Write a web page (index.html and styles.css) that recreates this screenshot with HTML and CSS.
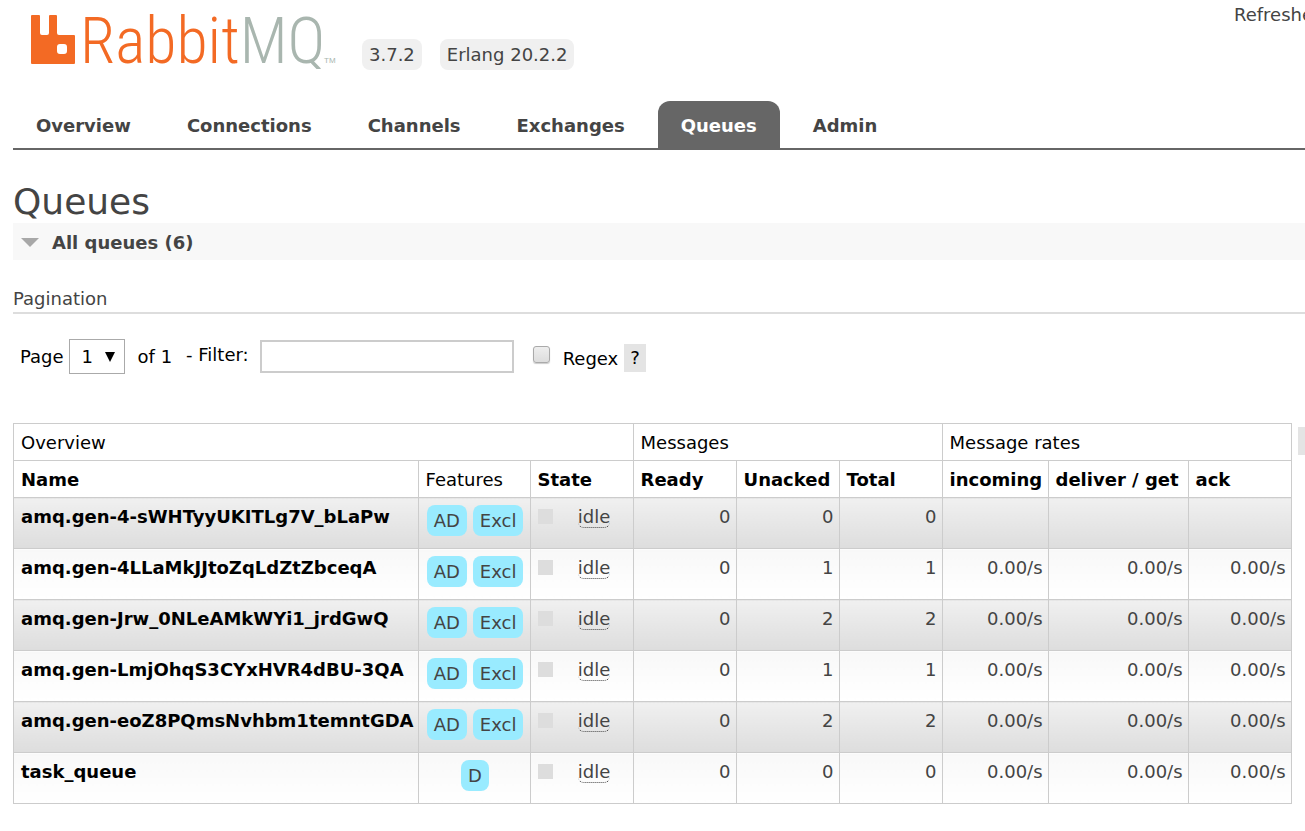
FILE: index.html
```html
<!DOCTYPE html>
<html lang="en">
<head>
    <meta charset="UTF-8">
    <meta name="viewport" content="width=device-width, initial-scale=1.0">
    <title>RabbitMQ Management</title>
    <link rel="stylesheet" href="styles.css">
</head>
<body>
    <header>
        <a class="logo" href="#" aria-label="RabbitMQ">
            <svg width="306" height="64" viewBox="0 -5 306 64">
                <path fill="#f36a24" fill-rule="evenodd" d="M0 6q0-1 1-1h7q1 0 1 1v17q0 2 2 2h5q2 0 2-2V6q0-1 1-1h6q1 0 1 1v17q0 2 2 2h15q1 0 1 1v27q0 1-1 1H1q-1 0-1-1zM29 34q-3 0-3 3v4q0 3 3 3h4q3 0 3-3v-4q0-3-3-3z"/>
                <text class="logo-text" x="49" y="53"><tspan fill="#f36a24">Rabbit</tspan><tspan fill="#a9b6af">MQ</tspan></text>
                <text class="logo-tm" x="293" y="53" fill="#a9b6af">TM</text>
            </svg>
        </a>
        <span class="version">3.7.2</span>
        <span class="version">Erlang 20.2.2</span>
        <span class="refreshed">Refreshed</span>
    </header>
    <nav>
        <a href="#">Overview</a>
        <a href="#">Connections</a>
        <a href="#">Channels</a>
        <a href="#">Exchanges</a>
        <a href="#" class="selected">Queues</a>
        <a href="#">Admin</a>
    </nav>
    <main>
        <h1>Queues</h1>
        <h2><svg width="18" height="10" viewBox="0 0 18 10"><path fill="#a8a8a8" d="M0 0h18L9 9z"/></svg>All queues (6)</h2>
        <h3>Pagination</h3>
        <form class="pagination">
            <label for="page">Page</label>
            <select id="page">
                <option>1</option>
            </select>
            <span class="pages">of 1</span>
            <label class="filter-label" for="filter">- Filter:</label>
            <input type="text" id="filter" class="filter">
            <input type="checkbox" id="regex" class="regex">
            <label class="regex-label" for="regex">Regex</label>
            <button type="button" class="help">?</button>
        </form>
        <div class="queues">
            <table>
                <thead>
                    <tr>
                        <th colspan="3">Overview</th>
                        <th colspan="3">Messages</th>
                        <th colspan="3">Message rates</th>
                    </tr>
                    <tr>
                        <th class="name"><a href="#">Name</a></th>
                        <th class="features">Features</th>
                        <th class="count"><a href="#">State</a></th>
                        <th class="count"><a href="#">Ready</a></th>
                        <th class="count"><a href="#">Unacked</a></th>
                        <th class="count"><a href="#">Total</a></th>
                        <th class="incoming"><a href="#">incoming</a></th>
                        <th class="deliver"><a href="#">deliver / get</a></th>
                        <th class="count"><a href="#">ack</a></th>
                    </tr>
                </thead>
                <tbody>
                    <tr>
                        <td><a href="#">amq.gen-4-sWHTyyUKITLg7V_bLaPw</a></td>
                        <td class="tags"><span>AD</span><span>Excl</span></td>
                        <td class="state"><i></i><abbr>idle</abbr></td>
                        <td class="num">0</td>
                        <td class="num">0</td>
                        <td class="num">0</td>
                        <td class="num"></td>
                        <td class="num"></td>
                        <td class="num"></td>
                    </tr>
                    <tr>
                        <td><a href="#">amq.gen-4LLaMkJJtoZqLdZtZbceqA</a></td>
                        <td class="tags"><span>AD</span><span>Excl</span></td>
                        <td class="state"><i></i><abbr>idle</abbr></td>
                        <td class="num">0</td>
                        <td class="num">1</td>
                        <td class="num">1</td>
                        <td class="num">0.00/s</td>
                        <td class="num">0.00/s</td>
                        <td class="num">0.00/s</td>
                    </tr>
                    <tr>
                        <td><a href="#">amq.gen-Jrw_0NLeAMkWYi1_jrdGwQ</a></td>
                        <td class="tags"><span>AD</span><span>Excl</span></td>
                        <td class="state"><i></i><abbr>idle</abbr></td>
                        <td class="num">0</td>
                        <td class="num">2</td>
                        <td class="num">2</td>
                        <td class="num">0.00/s</td>
                        <td class="num">0.00/s</td>
                        <td class="num">0.00/s</td>
                    </tr>
                    <tr>
                        <td><a href="#">amq.gen-LmjOhqS3CYxHVR4dBU-3QA</a></td>
                        <td class="tags"><span>AD</span><span>Excl</span></td>
                        <td class="state"><i></i><abbr>idle</abbr></td>
                        <td class="num">0</td>
                        <td class="num">1</td>
                        <td class="num">1</td>
                        <td class="num">0.00/s</td>
                        <td class="num">0.00/s</td>
                        <td class="num">0.00/s</td>
                    </tr>
                    <tr>
                        <td><a href="#">amq.gen-eoZ8PQmsNvhbm1temntGDA</a></td>
                        <td class="tags"><span>AD</span><span>Excl</span></td>
                        <td class="state"><i></i><abbr>idle</abbr></td>
                        <td class="num">0</td>
                        <td class="num">2</td>
                        <td class="num">2</td>
                        <td class="num">0.00/s</td>
                        <td class="num">0.00/s</td>
                        <td class="num">0.00/s</td>
                    </tr>
                    <tr>
                        <td><a href="#">task_queue</a></td>
                        <td class="tags"><span>D</span></td>
                        <td class="state"><i></i><abbr>idle</abbr></td>
                        <td class="num">0</td>
                        <td class="num">0</td>
                        <td class="num">0</td>
                        <td class="num">0.00/s</td>
                        <td class="num">0.00/s</td>
                        <td class="num">0.00/s</td>
                    </tr>
                </tbody>
            </table>
            <button type="button" class="columns">+/-</button>
        </div>
    </main>
</body>
</html>
```
FILE: styles.css
```css
body {
    margin: 0;
    padding-left: 13px;
    font: 18px/24px Verdana, "DejaVu Sans", sans-serif;
    color: #444;
    background: white;
    overflow-x: hidden;
}
a {
    color: black;
    font-weight: bold;
    text-decoration: none;
}
header {
    display: flex;
    align-items: flex-start;
    gap: 18px;
    padding-left: 18px;
}
.logo {
    padding-top: 5px;
    margin-right: 7px;
}
.logo svg {
    display: block;
}
.logo-text {
    font-family: "Roboto Condensed", "Liberation Sans Narrow", "Liberation Sans", sans-serif;
    font-size: 64px;
    font-weight: 300;
}
.logo-tm {
    font-family: "Liberation Sans", sans-serif;
    font-size: 8px;
    font-weight: normal;
}
.version {
    margin-top: 39px;
    padding: 4px 7px 3px;
    border-radius: 8px;
    background: #f0f0f0;
    white-space: nowrap;
}
.refreshed {
    flex: none;
    width: 71px;
    margin-left: auto;
    padding-top: 3px;
    white-space: nowrap;
}
nav {
    display: flex;
    gap: 10px;
    margin-top: 31px;
    border-bottom: 2px solid #666;
}
nav a {
    padding: 13px 23px 10px;
    border-radius: 12px 12px 0 0;
    color: #444;
}
nav .selected {
    background: #666;
    color: white;
}
h1 {
    margin: 30px 0 0;
    font-size: 36px;
    line-height: 43px;
    font-weight: normal;
}
h2 {
    display: flex;
    align-items: center;
    gap: 13px;
    margin: 0;
    padding: 8px 8px 5px;
    font-size: 18px;
    background: #f8f8f8;
}
h3 {
    margin: 27px 0 0;
    padding-bottom: 1px;
    border-bottom: 2px solid #ddd;
    font-size: 18px;
    font-weight: normal;
}
.pagination {
    display: flex;
    align-items: center;
    margin: 25px 0 49px;
    padding-left: 7px;
    color: black;
}
.pagination select {
    appearance: none;
    width: 56px;
    height: 35px;
    margin: 0 13px 0 5px;
    padding: 0 12px;
    border: 1px solid #aaa;
    border-radius: 0;
    font: inherit;
    color: black;
    background: white url("data:image/svg+xml,%3Csvg xmlns='http://www.w3.org/2000/svg' width='10' height='10'%3E%3Cpath d='M0 0h10L5 10z'/%3E%3C/svg%3E") no-repeat right 9px center;
}
.filter-label {
    margin: 0 11px 3px 14px;
}
.filter {
    box-sizing: border-box;
    width: 254px;
    height: 33px;
    padding: 2px 6px;
    border: 2px solid #ccc;
    font: inherit;
}
.regex {
    appearance: none;
    box-sizing: border-box;
    width: 17px;
    height: 17px;
    margin: 0 13px 4px 19px;
    border: 1px solid #aaa;
    border-radius: 3px;
    background: linear-gradient(#eee, #ddd);
    box-shadow: 0 1px 1px #ccc;
}
.regex-label {
    margin: 4px 6px 0 0;
}
.help, .columns {
    padding: 2px 6px;
    border: none;
    font: inherit;
    color: black;
    background: #e4e4e4;
}
.help {
    margin-top: 2px;
}
.queues {
    display: flex;
    align-items: flex-start;
    gap: 6px;
}
.columns {
    flex: none;
    margin-top: 4px;
    padding: 2px 7px;
}
table {
    flex: none;
    border-collapse: collapse;
}
th, td {
    padding: 7px 5px 5px 7px;
    border: 1px solid #ccc;
    text-align: left;
    vertical-align: top;
    white-space: nowrap;
}
th {
    font-weight: normal;
    color: black;
}
.name {
    min-width: 390px;
}
.features {
    min-width: 99px;
}
.count {
    min-width: 90px;
}
.incoming {
    min-width: 93px;
}
.deliver {
    min-width: 127px;
}
td {
    height: 38px;
    background: linear-gradient(#f8f8f8, #fff);
}
td:first-child {
    padding-right: 4px;
}
tbody tr:nth-child(odd) td {
    background: linear-gradient(#f0f0f0, #ddd);
}
td.tags {
    text-align: center;
}
.tags span {
    display: inline-block;
    padding: 0 7px;
    border-radius: 8px;
    line-height: 31px;
    background: #99ebff;
}
.tags span + span {
    margin-left: 6px;
}
td.state {
    text-align: center;
}
.state i {
    float: left;
    width: 15px;
    height: 15px;
    margin: 4px 8px 0 0;
    background: #ddd;
}
.state abbr {
    border-bottom: 1px dotted #444;
    border-radius: 6px;
}
td.num {
    text-align: right;
}
```
